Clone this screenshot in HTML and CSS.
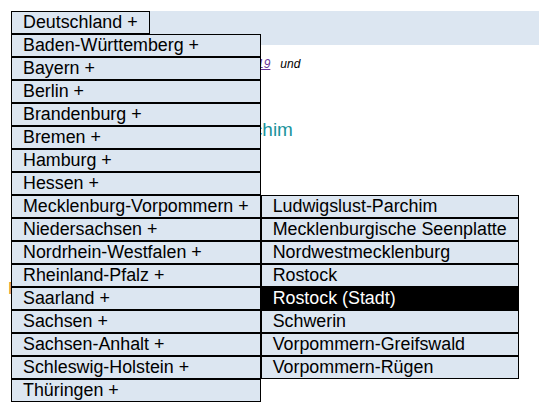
FILE: index.html
```html
<!DOCTYPE html>
<html lang="de">
<head>
  <meta charset="UTF-8">
  <meta name="viewport" content="width=device-width, initial-scale=1.0">
  <title>Landkreise</title>

  <link rel="stylesheet" href="styles.css">

</head>
<body>
  <!-- Navigation -->
  <nav class="topbar">
    <ul class="menu">
      <li class="item has-sub">Deutschland +
        <ul class="submenu">
          <li class="item">Baden-Württemberg +</li>
          <li class="item">Bayern +</li>
          <li class="item">Berlin +</li>
          <li class="item">Brandenburg +</li>
          <li class="item">Bremen +</li>
          <li class="item">Hamburg +</li>
          <li class="item">Hessen +</li>
          <li class="item has-sub">Mecklenburg-Vorpommern +
            <ul class="submenu side">
              <li class="item">Ludwigslust-Parchim</li>
              <li class="item">Mecklenburgische Seenplatte</li>
              <li class="item">Nordwestmecklenburg</li>
              <li class="item">Rostock</li>
              <li class="item active">Rostock (Stadt)</li>
              <li class="item">Schwerin</li>
              <li class="item">Vorpommern-Greifswald</li>
              <li class="item">Vorpommern-Rügen</li>
            </ul>
          </li>
          <li class="item">Niedersachsen +</li>
          <li class="item">Nordrhein-Westfalen +</li>
          <li class="item">Rheinland-Pfalz +</li>
          <li class="item">Saarland +</li>
          <li class="item">Sachsen +</li>
          <li class="item">Sachsen-Anhalt +</li>
          <li class="item">Schleswig-Holstein +</li>
          <li class="item">Thüringen +</li>
        </ul>
      </li>
    </ul>
  </nav>

  <!-- Page content -->
  <main class="content">
    <p class="meta"><a href="#">19</a>&nbsp;&nbsp; und</p>
    <h2 class="title">Landkreis Ludwigslust-Parchim</h2>
    <p class="note">Fläche und Bevölkerung</p>
  </main>
</body>
</html>
```

FILE: styles.css
```css
html, body {
  min-height: 100%;
}

body {
  margin: 0;
  min-height: 415px;
  font-family: "Liberation Sans", Arial, sans-serif;
  color: #000;
}

.topbar {
  position: relative;
  z-index: 2;
  margin: 11px 0 0 11px;
  height: 34px;
  background-color: #dce6f1;
}

.menu, .submenu {
  list-style: none;
  margin: 0;
  padding: 0;
}

.item {
  display: block;
  padding: 0 11px;
  border: 1px solid #000;
  background-color: #dce6f1;
  font-size: 17.85px;
  line-height: 21px;
  white-space: nowrap;
  cursor: pointer;
}

.menu > .item {
  display: inline-block;
}

.has-sub {
  position: relative;
}

.submenu {
  position: absolute;
  top: calc(100% + 1px);
  left: -1px;
  width: max-content;
}

.submenu.side {
  top: -1px;
  left: calc(100% + 1px);
}

.item.active {
  background-color: #000;
  color: #fff;
}

.content {
  margin-left: 8px;
  padding-bottom: 120px;
}

.meta {
  margin: 12px 0 0;
  padding-left: 249px;
  font-size: 12px;
  line-height: 14px;
  font-style: italic;
}

.meta a {
  color: #663399;
}

.title {
  margin: 48px 0 0 22px;
  font-size: 19px;
  line-height: 22px;
  font-weight: normal;
  color: #1a939c;
}

.note {
  margin: 138px 0 0;
  font-size: 17px;
  line-height: 20px;
  color: #e0962a;
}
```
